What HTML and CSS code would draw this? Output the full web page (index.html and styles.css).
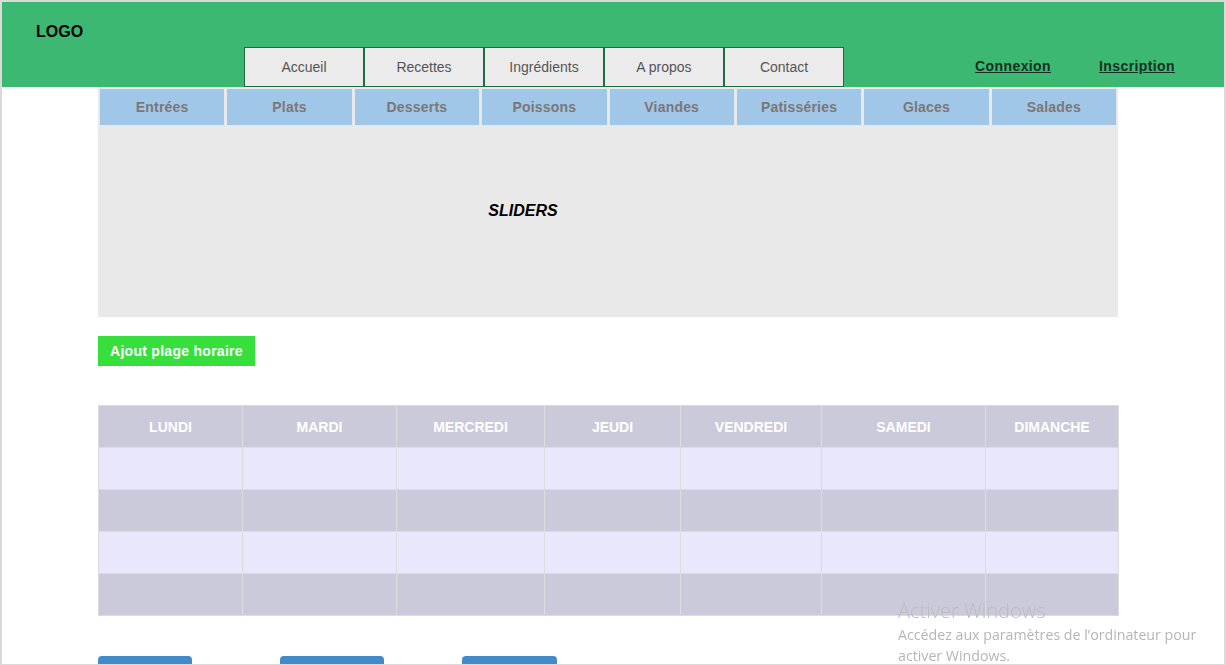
FILE: index.html
```html
<!DOCTYPE html>
<html lang="fr">
<head>
<meta charset="utf-8">
<title>Recettes</title>
<link rel="stylesheet" href="styles.css">
</head>
<body>
<div class="page">
  <header class="header">
    <div class="logo">LOGO</div>
    <div class="header-bottom">
      <nav class="nav">
        <a class="nav-item">Accueil</a>
        <a class="nav-item">Recettes</a>
        <a class="nav-item">Ingrédients</a>
        <a class="nav-item">A propos</a>
        <a class="nav-item">Contact</a>
      </nav>
      <div class="auth">
        <a class="auth-link">Connexion</a>
        <a class="auth-link">Inscription</a>
      </div>
    </div>
  </header>

  <main class="main">
    <section class="showcase">
      <div class="categories">
        <div class="cat">Entrées</div>
        <div class="cat">Plats</div>
        <div class="cat">Desserts</div>
        <div class="cat">Poissons</div>
        <div class="cat">Viandes</div>
        <div class="cat">Patisséries</div>
        <div class="cat">Glaces</div>
        <div class="cat">Salades</div>
      </div>
      <div class="slider"><span class="slider-label">SLIDERS</span></div>
    </section>

    <button class="add-btn">Ajout plage horaire</button>

    <table class="planning">
      <colgroup>
        <col class="c1"><col class="c2"><col class="c3"><col class="c4"><col class="c5"><col class="c6"><col class="c7">
      </colgroup>
      <thead>
        <tr><th>LUNDI</th><th>MARDI</th><th>MERCREDI</th><th>JEUDI</th><th>VENDREDI</th><th>SAMEDI</th><th>DIMANCHE</th></tr>
      </thead>
      <tbody>
        <tr class="light"><td></td><td></td><td></td><td></td><td></td><td></td><td></td></tr>
        <tr class="dark"><td></td><td></td><td></td><td></td><td></td><td></td><td></td></tr>
        <tr class="light"><td></td><td></td><td></td><td></td><td></td><td></td><td></td></tr>
        <tr class="dark"><td></td><td></td><td></td><td></td><td></td><td></td><td></td></tr>
      </tbody>
    </table>

    <div class="actions">
      <div class="slot"><button class="blue-btn w94"></button></div>
      <div class="slot"><button class="blue-btn w104"></button></div>
      <div class="slot"><button class="blue-btn w95"></button></div>
    </div>
  </main>
</div>

<div class="frame"></div>
<div class="watermark">
  <div class="wm-title">Activer Windows</div>
  <div class="wm-text">Accédez aux paramètres de l’ordinateur pour<br>activer Windows.</div>
</div>
</body>
</html>
```

FILE: styles.css
```css
html, body {
  margin: 0;
  padding: 0;
  background: #ffffff;
  font-family: "Liberation Sans", Arial, sans-serif;
  overflow: hidden;
}

.page {
  padding: 2px 2px 0 2px;
  height: 663px;
  overflow: hidden;
}

.frame {
  position: fixed;
  inset: 0;
  border-top: 2px solid #dadada;
  border-left: 2px solid #dadada;
  border-right: 2px solid #dadada;
  border-bottom: 1px solid #dadada;
  pointer-events: none;
}

/* Header */
.header {
  background: #3cb873;
  height: 85px;
  display: flex;
  flex-direction: column;
}

.logo {
  height: 45px;
  box-sizing: border-box;
  padding: 21px 0 0 34px;
  font-weight: bold;
  font-size: 16px;
  line-height: 18px;
  color: #000;
}

.header-bottom {
  height: 40px;
  display: flex;
  align-items: stretch;
}

.nav {
  display: flex;
  margin-left: 242px;
}

.nav-item {
  width: 120px;
  box-sizing: border-box;
  border: 1px solid #1e6a43;
  background: #ebebeb;
  color: #555555;
  font-size: 14px;
  display: flex;
  align-items: center;
  justify-content: center;
}

.auth {
  margin-left: auto;
  margin-right: 49px;
  display: flex;
  gap: 48px;
  padding-top: 11px;
}

.auth-link {
  font-weight: bold;
  font-size: 14px;
  letter-spacing: 0.4px;
  color: #14301f;
  text-decoration: underline;
  line-height: 16px;
}

/* Main */
.main {
  margin-left: 96px;
  width: 1020px;
}

.showcase {
  background: #e9e9e9;
  height: 230px;
  display: flex;
  flex-direction: column;
}

.categories {
  display: flex;
  gap: 3px;
  padding: 2px 2px 0 2px;
}

.cat {
  flex: 1;
  height: 36px;
  background: #a0c7e7;
  color: #7d7676;
  font-weight: bold;
  font-size: 14px;
  letter-spacing: 0.2px;
  display: flex;
  align-items: center;
  justify-content: center;
}

.slider {
  width: 850px;
  padding-top: 77px;
  text-align: center;
}

.slider-label {
  font-weight: bold;
  font-style: italic;
  font-size: 16px;
  color: #000;
}

.add-btn {
  display: block;
  margin-top: 19px;
  height: 30px;
  padding: 0 12px;
  border: none;
  background: #37df3d;
  color: #ffffff;
  font-family: "Liberation Sans", Arial, sans-serif;
  font-weight: bold;
  font-size: 14px;
  letter-spacing: 0.28px;
}

/* Planning table */
.planning {
  margin-top: 39px;
  width: 1020px;
  table-layout: fixed;
  border-collapse: collapse;
}

.c1 { width: 144px; }
.c2 { width: 154px; }
.c3 { width: 148px; }
.c4 { width: 136px; }
.c5 { width: 141px; }
.c6 { width: 164px; }
.c7 { width: 133px; }

.planning th,
.planning td {
  border: 1px solid #dcdcdc;
  height: 42px;
  padding: 0;
  box-sizing: border-box;
}

.planning th {
  background: #cbcadb;
  color: #ffffff;
  font-weight: bold;
  font-size: 14px;
  text-align: center;
}

.planning tr.light td { background: #e8e7fc; }
.planning tr.dark td { background: #cbcadb; }

/* Bottom buttons */
.actions {
  display: flex;
  margin-top: 40px;
}

.slot {
  width: 182px;
}

.blue-btn {
  display: block;
  height: 32px;
  border: none;
  border-radius: 4px;
  background: #428bca;
}

.w94 { width: 94px; }
.w104 { width: 104px; }
.w95 { width: 95px; }

/* Windows activation watermark */
.watermark {
  position: fixed;
  left: 898px;
  top: 598px;
  color: #bdbdbd;
  font-family: "Open Sans", "Noto Sans", sans-serif;
  pointer-events: none;
}

.wm-title {
  font-size: 20px;
  font-weight: 300;
  line-height: 26px;
}

.wm-text {
  font-size: 14.2px;
  line-height: 21px;
  color: #b5b5b5;
}
```
